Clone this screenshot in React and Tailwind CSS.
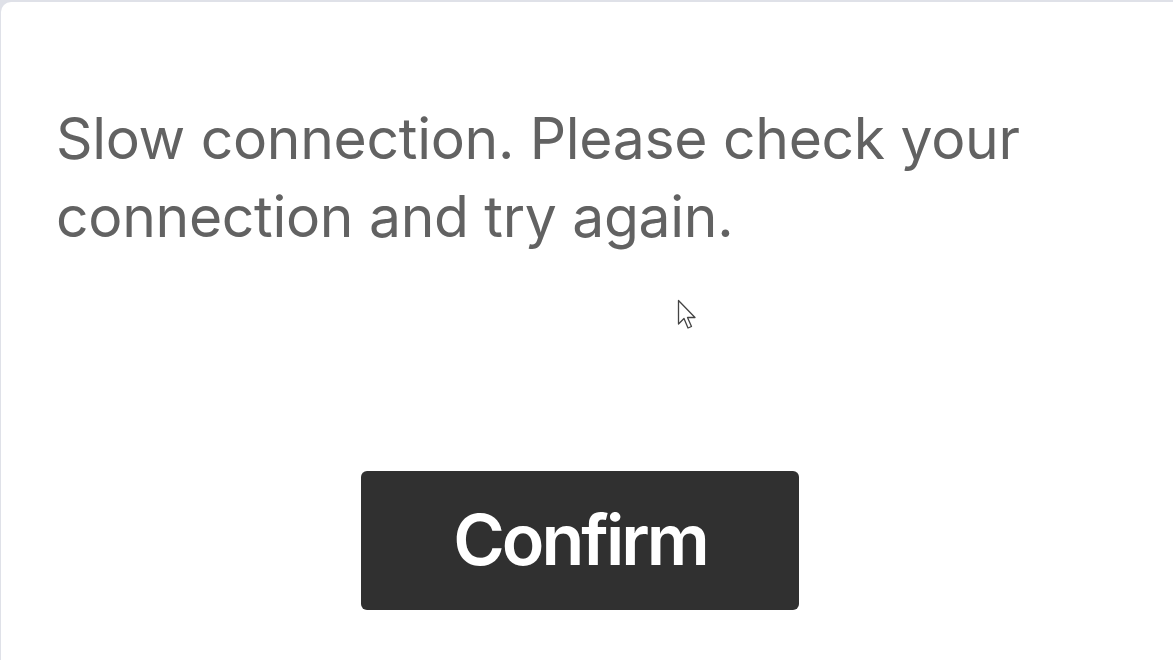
export default function App() {
  return (
    <div className="relative w-[1173px] h-[660px] overflow-hidden bg-[#dfe1e8]">
      <div
        className="relative h-[660px] mt-[2px] ml-[1px] rounded-tl-[10px] bg-white flex flex-col"
        style={{ fontFamily: 'Inter, "Open Sans", sans-serif' }}
      >
        <p className="pl-[55px] pt-[98px] pr-[100px] text-[57px] leading-[78px] text-[#626262] tracking-[-0.3px]">
          Slow connection. Please check your connection and try again.
        </p>

        <div className="flex justify-center pt-[215px] pr-[14px]">
          <button className="w-[438px] h-[139px] rounded-[6px] bg-[#303030] text-white text-[70px] font-semibold tracking-[-3px] flex items-center justify-center pb-[2px]">
            Confirm
          </button>
        </div>

        <svg
          className="absolute left-[676px] top-[297px]"
          width="22"
          height="34"
          viewBox="0 0 22 34"
        >
          <path
            d="M1.5 1.5 L1.5 25 L7 19.5 L11 29 L14.5 27.5 L10.5 18.5 L18 18.5 Z"
            fill="white"
            stroke="#444"
            strokeWidth="1.3"
            strokeLinejoin="round"
          />
        </svg>
      </div>
    </div>
  );
}
